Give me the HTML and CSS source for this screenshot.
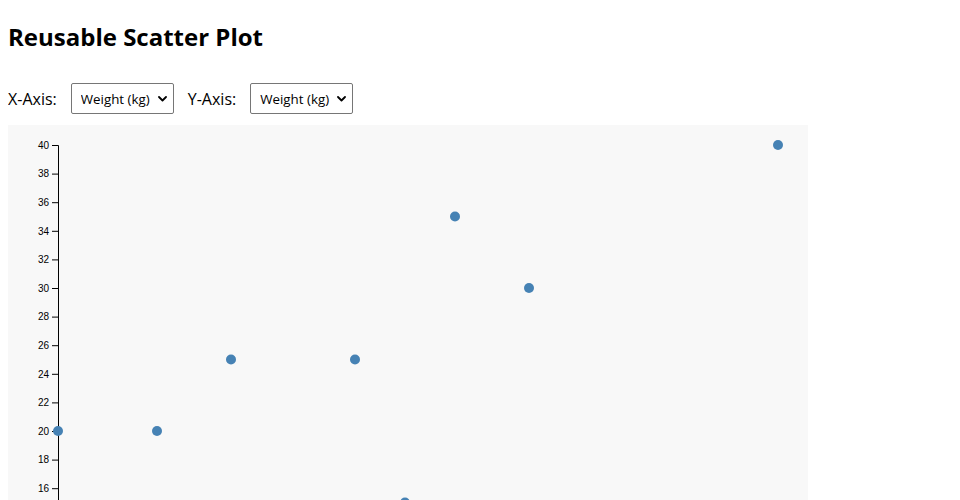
FILE: index.html
```html
<!DOCTYPE html>
<html>
<head>
<meta charset="utf-8">
<link rel="stylesheet" href="styles.css">
</head>
<body>
<h2 class="title">Reusable Scatter Plot</h2>
<div class="controls">
  <label class="ctl-label">X-Axis:</label>
  <span class="select-wrap">
    <select class="ctl-select"><option>Weight (kg)</option><option>Height (cm)</option><option>Age</option></select>
    <svg class="chev" width="9" height="6" viewBox="0 0 9 6"><path d="M1 1 L4.5 4.5 L8 1" fill="none" stroke="#000" stroke-width="1.8" stroke-linecap="round" stroke-linejoin="round"/></svg>
  </span>
  <label class="ctl-label">Y-Axis:</label>
  <span class="select-wrap">
    <select class="ctl-select"><option>Weight (kg)</option><option>Height (cm)</option><option>Age</option></select>
    <svg class="chev" width="9" height="6" viewBox="0 0 9 6"><path d="M1 1 L4.5 4.5 L8 1" fill="none" stroke="#000" stroke-width="1.8" stroke-linecap="round" stroke-linejoin="round"/></svg>
  </span>
</div>
<div class="chart">
<svg class="plot" width="800" height="640" viewBox="0 0 800 640">
  <g transform="translate(50,20)" class="axis">
    <path class="domain" d="M-6,0.5H0.5V572.5H-6"></path>
    <g id="ticks"></g>
  </g>
  <g transform="translate(50,20)" id="dots"></g>
</svg>
</div>
<script>
(function(){
  var ns = "http://www.w3.org/2000/svg";
  var ticks = document.getElementById("ticks");
  function y(v){ return (40 - v) * 14.3; }
  for (var v = 0; v <= 40; v += 2) {
    var g = document.createElementNS(ns, "g");
    g.setAttribute("transform", "translate(0," + (y(v) + 0.5) + ")");
    var l = document.createElementNS(ns, "line");
    l.setAttribute("x2", "-6");
    l.setAttribute("class", "tick-line");
    var t = document.createElementNS(ns, "text");
    t.setAttribute("x", "-9");
    t.setAttribute("dy", "0.32em");
    t.setAttribute("class", "tick-text");
    t.textContent = v;
    g.appendChild(l); g.appendChild(t);
    ticks.appendChild(g);
  }
  var data = [[0,20],[99,20],[173,25],[297,25],[347,15],[397,35],[471,30],[720,40]];
  var dots = document.getElementById("dots");
  data.forEach(function(d){
    var c = document.createElementNS(ns, "circle");
    c.setAttribute("cx", d[0]);
    c.setAttribute("cy", y(d[1]));
    c.setAttribute("r", "5");
    c.setAttribute("class", "dot");
    dots.appendChild(c);
  });
})();
</script>
</body>
</html>
```
FILE: styles.css
```css
body {
  margin: 8px;
  font-family: "Open Sans", sans-serif;
  color: #000;
  background: #fff;
}
.title {
  font-size: 24px;
  font-weight: 700;
  margin: 12px 0 20px;
}
.controls {
  display: flex;
  align-items: center;
  padding: 10px 0 11px;
  font-size: 16px;
}
.ctl-label {
  margin-right: 14px;
}
.select-wrap {
  position: relative;
  display: block;
  margin-right: 14px;
}
.ctl-select {
  display: block;
  -webkit-appearance: none;
  appearance: none;
  font-family: "Open Sans", sans-serif;
  font-size: 13.33px;
  width: 103px;
  height: 31px;
  padding: 0 20px 0 9px;
  margin: 0;
  border: 1px solid #767676;
  border-radius: 2px;
  background: #fff;
  color: #000;
}
.chev {
  position: absolute;
  right: 7px;
  top: 13px;
  pointer-events: none;
}
.chart {
  width: 800px;
  background: #f8f8f8;
}
.plot {
  display: block;
}
.domain {
  fill: none;
  stroke: #000;
  stroke-width: 1;
}
.tick-line {
  stroke: #000;
  stroke-width: 1;
}
.tick-text {
  font-family: "Liberation Sans", Arial, sans-serif;
  font-size: 10px;
  text-anchor: end;
  fill: #000;
}
.dot {
  fill: steelblue;
}
```
